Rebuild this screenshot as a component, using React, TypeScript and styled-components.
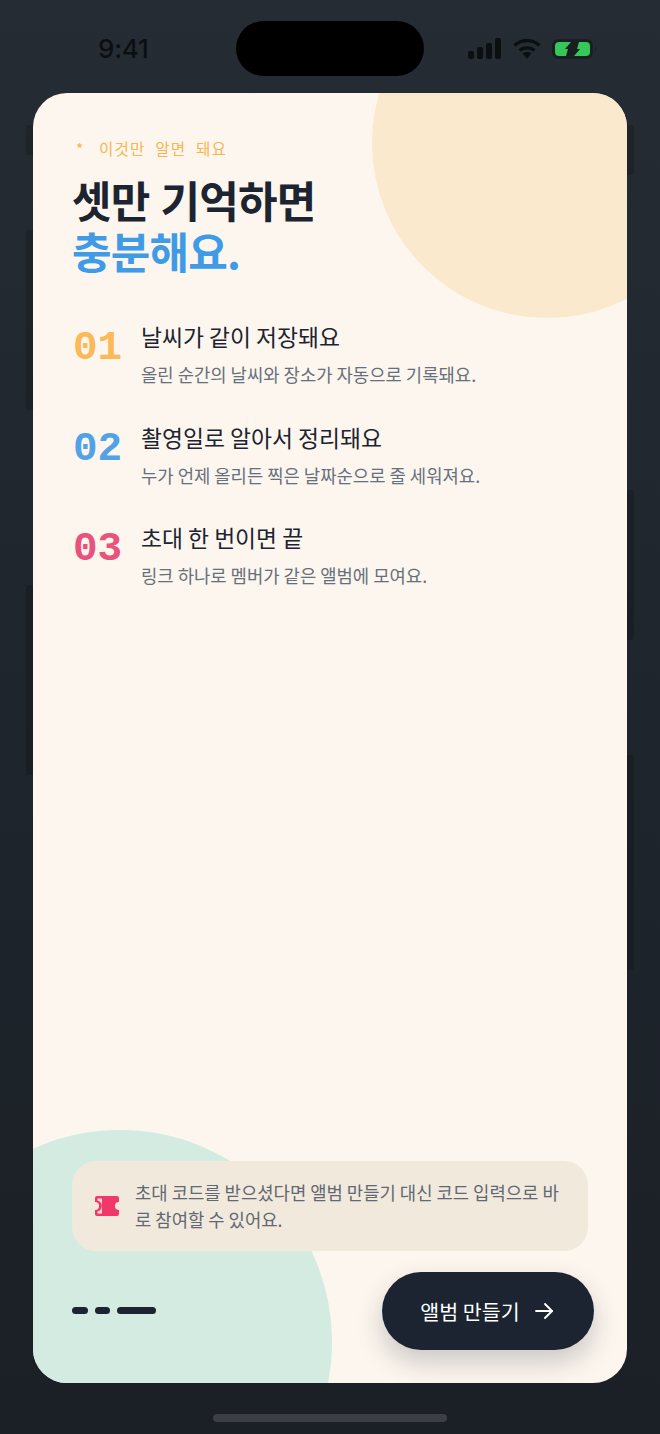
import React from "react";
import styled, { createGlobalStyle } from "styled-components";

const Global = createGlobalStyle`
  html, body { margin: 0; padding: 0; background: #1e242b; }
  * { box-sizing: border-box; }
`;

const Screen = styled.div`
  position: relative;
  width: 660px;
  height: 1434px;
  overflow: hidden;
  display: flex;
  flex-direction: column;
  background: linear-gradient(180deg, #262c33 0%, #1f252c 50%, #1b2027 100%);
  font-family: "Noto Sans CJK KR", "Noto Sans", sans-serif;
`;

const Ghost = styled.div<{ $side: "left" | "right"; $top: number; $height: number }>`
  position: absolute;
  ${(p) => p.$side}: 26px;
  top: ${(p) => p.$top}px;
  width: 8px;
  height: ${(p) => p.$height}px;
  background: rgba(0, 0, 0, 0.16);
  border-radius: 3px;
`;

const StatusBar = styled.div`
  height: 93px;
  flex: none;
  display: flex;
  align-items: flex-start;
  padding-top: 21px;
`;

const Time = styled.div`
  width: 236px;
  height: 55px;
  padding-left: 98px;
  display: flex;
  align-items: center;
  font-family: Inter, "Noto Sans", sans-serif;
  font-size: 26px;
  font-weight: 500;
  letter-spacing: -0.2px;
  color: #0c0f12;
`;

const Island = styled.div`
  width: 188px;
  height: 55px;
  border-radius: 28px;
  background: #000;
`;

const StatusIcons = styled.div`
  height: 55px;
  padding-left: 44px;
  display: flex;
  align-items: center;
  gap: 11px;
`;

const Card = styled.main`
  position: relative;
  width: 594px;
  height: 1290px;
  margin-left: 33px;
  border-radius: 34px;
  overflow: hidden;
  background: #fdf6ee;
  padding: 45px 33px 33px 39px;
  display: flex;
  flex-direction: column;
  flex: none;
`;

const Blob = styled.div<{ $color: string; $size: number; $left: number; $top: number }>`
  position: absolute;
  left: ${(p) => p.$left}px;
  top: ${(p) => p.$top}px;
  width: ${(p) => p.$size}px;
  height: ${(p) => p.$size}px;
  border-radius: 50%;
  background: ${(p) => p.$color};
`;

const Kicker = styled.div`
  position: relative;
  font-size: 15.7px;
  line-height: 22px;
  height: 22px;
  padding-left: 4px;
  color: #f8b551;
  letter-spacing: 1.1px;
  word-spacing: 5px;
  white-space: pre;
  display: flex;
`;

const KickerStar = styled.span`
  width: 23px;
  flex: none;
`;

const Heading = styled.h1`
  position: relative;
  margin: 14px 0 0;
  font-size: 43px;
  line-height: 51px;
  font-weight: 700;
  letter-spacing: -0.8px;
  word-spacing: 2px;
  color: #1b2430;
`;

const Accent = styled.span`
  display: block;
  color: #3f9be6;
`;

const Steps = styled.ol`
  position: relative;
  list-style: none;
  margin: 44px 0 0;
  padding: 0;
  display: flex;
  flex-direction: column;
  gap: 27.5px;
`;

const Step = styled.li`
  display: flex;
  height: 73px;
`;

const StepNumber = styled.div<{ $color: string }>`
  width: 69px;
  flex: none;
  padding-left: 1px;
  padding-top: 5px;
  font-family: "Liberation Mono", monospace;
  font-size: 41px;
  line-height: 46px;
  font-weight: 700;
  color: ${(p) => p.$color};
`;

const StepBody = styled.div`
  display: flex;
  flex-direction: column;
`;

const StepTitle = styled.div`
  font-size: 22.8px;
  line-height: 34px;
  color: #1b2430;
`;

const StepDesc = styled.div`
  margin-top: 7px;
  font-size: 17.75px;
  line-height: 26px;
  color: #66707d;
  white-space: nowrap;
`;

const Tip = styled.div`
  position: relative;
  margin-top: auto;
  margin-right: 6px;
  height: 90px;
  border-radius: 24px;
  background: #f2e9dd;
  display: flex;
  align-items: center;
  gap: 15px;
  padding: 0 20px 0 22px;
`;

const TipIcon = styled.span`
  display: flex;
  flex: none;
`;

const TipText = styled.p`
  margin: 0;
  font-size: 17.75px;
  line-height: 27px;
  color: #5f6873;
  word-break: break-all;
`;

const Footer = styled.div`
  position: relative;
  margin-top: 21px;
  display: flex;
  align-items: center;
  justify-content: space-between;
`;

const Dashes = styled.div`
  display: flex;
  gap: 7px;
  margin-bottom: 1px;
`;

const Dash = styled.span<{ $wide?: boolean }>`
  display: block;
  width: ${(p) => (p.$wide ? 39 : 15.5)}px;
  height: 7px;
  border-radius: 4px;
  background: #1b2430;
`;

const CreateButton = styled.button`
  width: 212px;
  height: 78px;
  border: 0;
  border-radius: 39px;
  background: #1b2430;
  color: #fff;
  font-family: inherit;
  font-size: 20.6px;
  display: flex;
  align-items: center;
  justify-content: center;
  gap: 12px;
  box-shadow: 0 12px 26px rgba(27, 36, 48, 0.22);
`;

const HomeIndicator = styled.div`
  width: 234px;
  height: 8px;
  margin: 31px auto 0;
  border-radius: 4px;
  background: #3b3f45;
`;

const Signal = () => (
  <svg width="34" height="21" viewBox="0 0 34 21" fill="#0c0f12">
    <rect x="0" y="13" width="6" height="8" rx="2" />
    <rect x="9" y="9" width="6" height="12" rx="2" />
    <rect x="18" y="5" width="6" height="16" rx="2" />
    <rect x="27" y="0" width="6" height="21" rx="2" />
  </svg>
);

const Wifi = () => (
  <svg width="28" height="22" viewBox="0 0 28 22" fill="none" stroke="#0c0f12" strokeWidth="3.2">
    <path d="M1.5 7.5 C8.5 1 19.5 1 26.5 7.5" />
    <path d="M6.5 12.5 C10.5 9 17.5 9 21.5 12.5" />
    <path d="M9.5 15.5 L14 20.5 L18.5 15.5 C16 13.6 12 13.6 9.5 15.5 Z" fill="#0c0f12" stroke="none" />
  </svg>
);

const Battery = () => (
  <svg width="45" height="20" viewBox="0 0 45 20">
    <rect x="0" y="0" width="41" height="20" rx="6.5" fill="#181e22" />
    <path d="M7 3 H19 L13 10 H16 L14 17 H7 a4 4 0 0 1 -4 -4 V7 a4 4 0 0 1 4 -4 Z" fill="#35c759" />
    <path d="M34 17 H22 L28 10 H25 L27 3 H34 a4 4 0 0 1 4 4 V13 a4 4 0 0 1 -4 4 Z" fill="#35c759" />
    <path d="M43 7 C44.5 8 44.5 12 43 13 Z" fill="#181e22" />
  </svg>
);

const Ticket = () => (
  <svg width="26" height="22" viewBox="0 0 26 22">
    <path
      d="M3 1 H23 a2 2 0 0 1 2 2 V7 a4 4 0 0 0 0 8 V19 a2 2 0 0 1 -2 2 H3 a2 2 0 0 1 -2 -2 V15 a4 4 0 0 0 0 -8 V3 a2 2 0 0 1 2 -2 Z"
      fill="#f0386b"
    />
    <path d="M3.5 3.5 H8 V18.5 H3.5 V16.6 a5.8 5.8 0 0 0 0 -11.2 Z" fill="#fbd9dc" />
  </svg>
);

const Arrow = () => (
  <svg width="24" height="24" viewBox="0 0 24 24" fill="none" stroke="#fff" strokeWidth="1.9" strokeLinecap="round" strokeLinejoin="round">
    <path d="M4 12 H20" />
    <path d="M13 5 L20 12 L13 19" />
  </svg>
);

const steps = [
  { n: "01", color: "#fbb957", title: "날씨가 같이 저장돼요", desc: "올린 순간의 날씨와 장소가 자동으로 기록돼요." },
  { n: "02", color: "#52a2e6", title: "촬영일로 알아서 정리돼요", desc: "누가 언제 올리든 찍은 날짜순으로 줄 세워져요." },
  { n: "03", color: "#e8527c", title: "초대 한 번이면 끝", desc: "링크 하나로 멤버가 같은 앨범에 모여요." },
];

export default function App() {
  return (
    <Screen>
      <Global />
      <Ghost $side="left" $top={125} $height={30} />
      <Ghost $side="left" $top={230} $height={180} />
      <Ghost $side="left" $top={585} $height={190} />
      <Ghost $side="right" $top={125} $height={50} />
      <Ghost $side="right" $top={490} $height={150} />
      <Ghost $side="right" $top={755} $height={215} />
      <StatusBar>
        <Time>9:41</Time>
        <Island />
        <StatusIcons>
          <Signal />
          <Wifi />
          <Battery />
        </StatusIcons>
      </StatusBar>
      <Card>
        <Blob $color="#fbe9cd" $size={350} $left={339} $top={-125} />
        <Blob $color="#d4ebe2" $size={424} $left={-125} $top={1037} />
        <Kicker>
          <KickerStar>*</KickerStar>이것만 알면 돼요
        </Kicker>
        <Heading>
          셋만 기억하면
          <Accent>충분해요.</Accent>
        </Heading>
        <Steps>
          {steps.map((s) => (
            <Step key={s.n}>
              <StepNumber $color={s.color}>{s.n}</StepNumber>
              <StepBody>
                <StepTitle>{s.title}</StepTitle>
                <StepDesc>{s.desc}</StepDesc>
              </StepBody>
            </Step>
          ))}
        </Steps>
        <Tip>
          <TipIcon>
            <Ticket />
          </TipIcon>
          <TipText>초대 코드를 받으셨다면 앨범 만들기 대신 코드 입력으로 바로 참여할 수 있어요.</TipText>
        </Tip>
        <Footer>
          <Dashes>
            <Dash />
            <Dash />
            <Dash $wide />
          </Dashes>
          <CreateButton>
            앨범 만들기
            <Arrow />
          </CreateButton>
        </Footer>
      </Card>
      <HomeIndicator />
    </Screen>
  );
}
